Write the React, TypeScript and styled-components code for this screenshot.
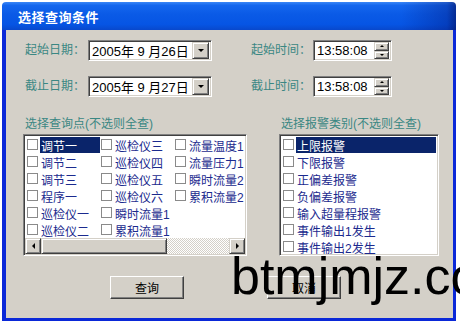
import { FunctionComponent } from 'react';
import styled, { createGlobalStyle } from 'styled-components';

const GlobalStyle = createGlobalStyle`
  html, body {
    margin: 0;
    padding: 0;
    background: #ffffff;
  }
  body {
    font-family: "Liberation Sans", "Noto Sans CJK SC", sans-serif;
  }
`;

const CJK = `"Liberation Sans", "Noto Sans CJK SC", sans-serif`;

const Page = styled.div`
  position: relative;
  width: 460px;
  height: 325px;
  overflow: hidden;
  background: #ffffff;
`;

const Win = styled.div`
  display: flex;
  flex-direction: column;
  width: 454px;
  height: 319px;
  margin: 2px 0 0 2px;
`;

const TitleBar = styled.div`
  height: 28px;
  display: flex;
  align-items: center;
  padding-left: 16px;
  border-radius: 4px 4px 0 0;
  background:
    linear-gradient(to right, rgba(0, 0, 0, 0) 88%, rgba(0, 20, 120, 0.35) 98%, rgba(0, 10, 90, 0.6) 100%),
    linear-gradient(to bottom, #3a86f6 0%, #1466ee 12%, #0a5ae6 45%, #0655e4 80%, #0848cc 100%);
  color: #ffffff;
  font: bold 13px ${CJK};
  letter-spacing: 0.5px;
`;

const Frame = styled.div`
  flex: 1;
  display: flex;
  flex-direction: column;
  background: #d4d0c8;
  border-left: 4px solid #0a28d8;
  border-right: 3px solid #0a28d8;
  border-bottom: 3px solid #0a28d8;
  padding-top: 10px;
`;

const FieldRows = styled.div`
  display: flex;
  flex-direction: column;
  gap: 15px;
  padding-left: 19px;
`;

const Row = styled.div`
  display: flex;
  gap: 39px;
  height: 21px;
`;

const Field = styled.div`
  display: flex;
  align-items: center;
`;

const Label = styled.span<{ $w: number }>`
  width: ${(p) => p.$w}px;
  font: 12px ${CJK};
  color: #3a8783;
  line-height: 21px;
  white-space: nowrap;
`;

const Sunken = styled.div<{ $w: number }>`
  position: relative;
  box-sizing: border-box;
  width: ${(p) => p.$w}px;
  height: 21px;
  background: #ffffff;
  border: 1px solid;
  border-color: #808080 #ffffff #ffffff #808080;
  box-shadow: inset 1px 1px 0 #404040, inset -1px -1px 0 #d4d0c8;
  display: flex;
  align-items: center;
  padding: 0 2px 0 2px;
  font: 13px ${CJK};
  color: #000000;
  white-space: nowrap;
`;

const ValueText = styled.span`
  flex: 1;
  padding-left: 1px;
`;

const Raised = styled.div`
  box-sizing: border-box;
  background: #d4d0c8;
  border: 1px solid;
  border-color: #d4d0c8 #404040 #404040 #d4d0c8;
  box-shadow: inset 1px 1px 0 #ffffff, inset -1px -1px 0 #808080;
  display: flex;
  align-items: center;
  justify-content: center;
`;

const DropButton = styled(Raised)`
  width: 17px;
  height: 17px;
`;

const SpinCol = styled.div`
  display: flex;
  flex-direction: column;
  width: 15px;
  height: 17px;
`;

const SpinHalf = styled(Raised)`
  flex: 1;
`;

const Tri = styled.span<{ $dir: 'up' | 'down' | 'left' | 'right'; $s: number }>`
  width: 0;
  height: 0;
  border-style: solid;
  border-color: transparent;
  ${(p) =>
    p.$dir === 'down'
      ? `border-width: ${p.$s}px ${p.$s}px 0 ${p.$s}px; border-top-color: #000;`
      : p.$dir === 'up'
      ? `border-width: 0 ${p.$s}px ${p.$s}px ${p.$s}px; border-bottom-color: #000;`
      : p.$dir === 'left'
      ? `border-width: ${p.$s}px ${p.$s}px ${p.$s}px 0; border-right-color: #000;`
      : `border-width: ${p.$s}px 0 ${p.$s}px ${p.$s}px; border-left-color: #000;`}
`;

const Lists = styled.div`
  display: flex;
  gap: 32px;
  margin-top: 20px;
  padding-left: 17px;
`;

const Group = styled.div<{ $w: number }>`
  width: ${(p) => p.$w}px;
  display: flex;
  flex-direction: column;
`;

const GroupLabel = styled.div`
  font: 12px ${CJK};
  color: #3a8783;
  line-height: 14px;
  padding-left: 2px;
  margin-bottom: 3px;
  white-space: nowrap;
`;

const ListBox = styled.div`
  box-sizing: border-box;
  height: 122px;
  background: #ffffff;
  border: 1px solid;
  border-color: #808080 #ffffff #ffffff #808080;
  box-shadow: inset 1px 1px 0 #404040, inset -1px -1px 0 #d4d0c8;
  padding: 1px;
  display: flex;
  flex-direction: column;
  overflow: hidden;
`;

const ColumnGrid = styled.div`
  flex: 1;
  display: grid;
  grid-auto-flow: column;
  grid-template-rows: repeat(6, 17px);
  grid-auto-columns: 74px;
  padding-left: 2px;
  overflow: hidden;
`;

const RowList = styled.div`
  display: flex;
  flex-direction: column;
  padding-left: 2px;
`;

const Item = styled.div`
  height: 17px;
  display: flex;
  align-items: center;
  white-space: nowrap;
`;

const Box = styled.span`
  box-sizing: border-box;
  width: 11px;
  height: 11px;
  flex: none;
  border: 1px solid #8a8a8a;
  background: #ffffff;
  margin-right: 2px;
`;

const ItemText = styled.span<{ $sel?: boolean; $fill?: boolean }>`
  ${(p) => (p.$fill ? 'flex: 1;' : 'width: 59px;')}
  height: 16px;
  line-height: 16px;
  padding-left: 1px;
  margin-right: 1px;
  font: 12px ${CJK};
  color: ${(p) => (p.$sel ? '#ffffff' : '#1b2a8e')};
  background: ${(p) => (p.$sel ? '#0a246a' : 'transparent')};
`;

const HScroll = styled.div`
  height: 16px;
  display: flex;
  flex: none;
`;

const ScrollBtn = styled(Raised)`
  width: 16px;
  height: 16px;
`;

const Thumb = styled(Raised)`
  width: 126px;
  height: 16px;
`;

const Track = styled.div`
  flex: 1;
  background-color: #ffffff;
  background-image: repeating-conic-gradient(#d4d0c8 0 25%, #ffffff 0 50%);
  background-size: 2px 2px;
`;

const Buttons = styled.div`
  display: flex;
  gap: 83px;
  margin-top: 20px;
  padding-left: 104px;
`;

const PushButton = styled.button`
  box-sizing: border-box;
  width: 74px;
  height: 23px;
  padding: 0;
  background: #d4d0c8;
  border: 1px solid;
  border-color: #ffffff #404040 #404040 #ffffff;
  box-shadow: inset -1px -1px 0 #808080;
  font: 12px ${CJK};
  color: #000000;
`;

const Watermark = styled.div`
  position: absolute;
  left: 231px;
  top: 250px;
  font: 52px "Liberation Sans", Arial, sans-serif;
  line-height: 52px;
  color: #000000;
  white-space: nowrap;
`;

const ComboBox: FunctionComponent<{ value: string }> = ({ value }) => (
  <Sunken $w={124}>
    <ValueText>{value}</ValueText>
    <DropButton>
      <Tri $dir="down" $s={3.5} />
    </DropButton>
  </Sunken>
);

const TimeBox: FunctionComponent<{ value: string }> = ({ value }) => (
  <Sunken $w={79}>
    <ValueText>{value}</ValueText>
    <SpinCol>
      <SpinHalf>
        <Tri $dir="up" $s={2} />
      </SpinHalf>
      <SpinHalf>
        <Tri $dir="down" $s={2} />
      </SpinHalf>
    </SpinCol>
  </Sunken>
);

const points = [
  '调节一', '调节二', '调节三', '程序一', '巡检仪一', '巡检仪二',
  '巡检仪三', '巡检仪四', '巡检仪五', '巡检仪六', '瞬时流量1', '累积流量1',
  '流量温度1', '流量压力1', '瞬时流量2', '累积流量2',
];

const alarms = [
  '上限报警', '下限报警', '正偏差报警', '负偏差报警', '输入超量程报警', '事件输出1发生', '事件输出2发生',
];

export default function App() {
  return (
    <Page>
      <GlobalStyle />
      <Win>
        <TitleBar>选择查询条件</TitleBar>
        <Frame>
          <FieldRows>
            <Row>
              <Field>
                <Label $w={63}>起始日期：</Label>
                <ComboBox value="2005年 9 月26日" />
              </Field>
              <Field>
                <Label $w={62}>起始时间：</Label>
                <TimeBox value="13:58:08" />
              </Field>
            </Row>
            <Row>
              <Field>
                <Label $w={63}>截止日期：</Label>
                <ComboBox value="2005年 9 月27日" />
              </Field>
              <Field>
                <Label $w={62}>截止时间：</Label>
                <TimeBox value="13:58:08" />
              </Field>
            </Row>
          </FieldRows>
          <Lists>
            <Group $w={224}>
              <GroupLabel>选择查询点(不选则全查)</GroupLabel>
              <ListBox>
                <ColumnGrid>
                  {points.map((p, i) => (
                    <Item key={p}>
                      <Box />
                      <ItemText $sel={i === 0}>{p}</ItemText>
                    </Item>
                  ))}
                </ColumnGrid>
                <HScroll>
                  <ScrollBtn>
                    <Tri $dir="left" $s={3.5} />
                  </ScrollBtn>
                  <Thumb />
                  <Track />
                  <ScrollBtn>
                    <Tri $dir="right" $s={3.5} />
                  </ScrollBtn>
                </HScroll>
              </ListBox>
            </Group>
            <Group $w={160}>
              <GroupLabel>选择报警类别(不选则全查)</GroupLabel>
              <ListBox>
                <RowList>
                  {alarms.map((a, i) => (
                    <Item key={a}>
                      <Box />
                      <ItemText $sel={i === 0} $fill>
                        {a}
                      </ItemText>
                    </Item>
                  ))}
                </RowList>
              </ListBox>
            </Group>
          </Lists>
          <Buttons>
            <PushButton>查询</PushButton>
            <PushButton>取消</PushButton>
          </Buttons>
        </Frame>
      </Win>
      <Watermark>btmjmjz.com</Watermark>
    </Page>
  );
}
